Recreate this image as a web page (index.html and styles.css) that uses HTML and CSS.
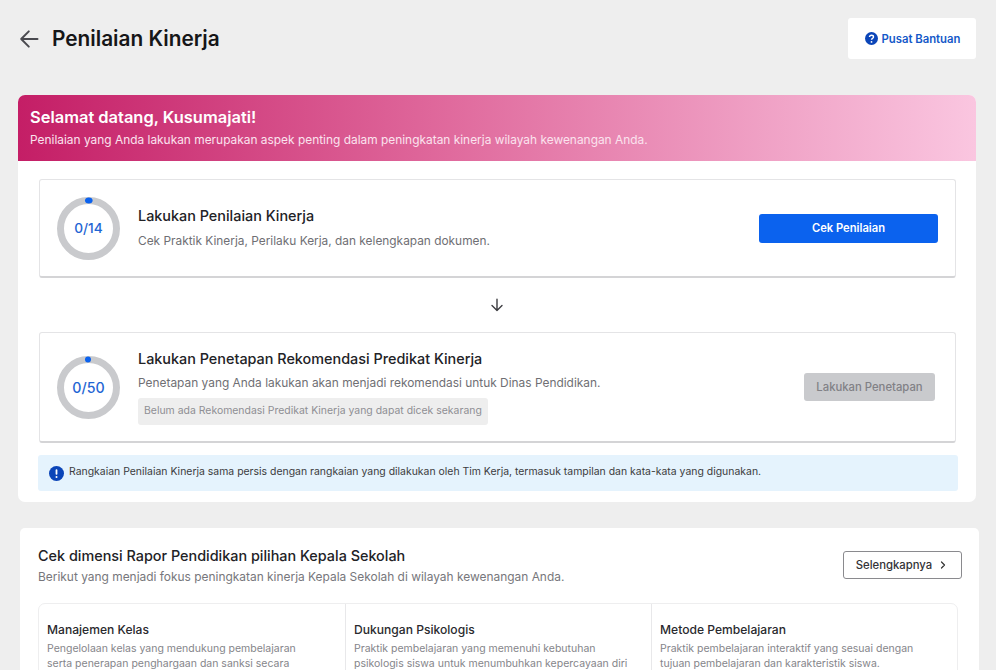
FILE: index.html
```html
<!DOCTYPE html>
<html lang="id">
<head>
<meta charset="utf-8">
<title>Penilaian Kinerja</title>
<link rel="stylesheet" href="styles.css">
</head>
<body>
<div class="page">
  <header class="top">
    <div class="top-left">
      <svg class="back" width="24" height="24" viewBox="0 0 24 24" fill="none" stroke="#4a4a4f" stroke-width="2" stroke-linecap="round" stroke-linejoin="round"><path d="M19.5 12H3.2M10.8 4.4 3.2 12l7.6 7.6"/></svg>
      <h1 class="title">Penilaian Kinerja</h1>
    </div>
    <a class="help">
      <svg width="13" height="13" viewBox="0 0 13 13"><circle cx="6.5" cy="6.5" r="6.5" fill="#0b45b8"/><path d="M4.5 5.1c0-1.2.9-1.9 2-1.9s2 .7 2 1.7c0 1.5-2 1.5-2 2.9" fill="none" stroke="#fff" stroke-width="1.4"/><circle cx="6.5" cy="9.9" r=".9" fill="#fff"/></svg>
      <span>Pusat Bantuan</span>
    </a>
  </header>

  <section class="panel">
    <div class="banner">
      <div class="banner-title">Selamat datang, Kusumajati!</div>
      <div class="banner-sub">Penilaian yang Anda lakukan merupakan aspek penting dalam peningkatan kinerja wilayah kewenangan Anda.</div>
    </div>
    <div class="panel-body">
      <div class="card card-one">
        <div class="ring">
          <svg width="63" height="63" viewBox="0 0 63 63"><circle cx="31.5" cy="31.5" r="28" fill="none" stroke="#c9cacd" stroke-width="7"/><ellipse cx="31.8" cy="3.6" rx="3.8" ry="3" fill="#0b62ee"/></svg>
          <span class="ring-label">0/14</span>
        </div>
        <div class="card-text">
          <h2 class="card-title">Lakukan Penilaian Kinerja</h2>
          <p class="card-desc">Cek Praktik Kinerja, Perilaku Kerja, dan kelengkapan dokumen.</p>
        </div>
        <a class="btn-primary">Cek Penilaian</a>
      </div>
      <div class="arrow">
        <svg width="14" height="14" viewBox="0 0 14 14" fill="none" stroke="#3c3c40" stroke-width="1.4" stroke-linecap="round" stroke-linejoin="round"><path d="M7 1.2v11.4M2 7.6l5 5 5-5"/></svg>
      </div>
      <div class="card card-two">
        <div class="ring">
          <svg width="63" height="63" viewBox="0 0 63 63"><circle cx="31.5" cy="31.5" r="28" fill="none" stroke="#c9cacd" stroke-width="7"/><circle cx="31" cy="3.6" r="3" fill="#0b62ee"/></svg>
          <span class="ring-label">0/50</span>
        </div>
        <div class="card-text">
          <h2 class="card-title">Lakukan Penetapan Rekomendasi Predikat Kinerja</h2>
          <p class="card-desc">Penetapan yang Anda lakukan akan menjadi rekomendasi untuk Dinas Pendidikan.</p>
          <div class="chip">Belum ada Rekomendasi Predikat Kinerja yang dapat dicek sekarang</div>
        </div>
        <a class="btn-disabled">Lakukan Penetapan</a>
      </div>
      <div class="notice">
        <svg width="15" height="15" viewBox="0 0 15 15"><circle cx="7.5" cy="7.5" r="7.5" fill="#0b45b8"/><rect x="6.6" y="3.2" width="1.8" height="5.6" rx=".8" fill="#fff"/><circle cx="7.5" cy="11" r="1" fill="#fff"/></svg>
        <span>Rangkaian Penilaian Kinerja sama persis dengan rangkaian yang dilakukan oleh Tim Kerja, termasuk tampilan dan kata-kata yang digunakan.</span>
      </div>
    </div>
  </section>

  <section class="panel-two">
    <div class="dim-head">
      <div>
        <h2 class="dim-title">Cek dimensi Rapor Pendidikan pilihan Kepala Sekolah</h2>
        <p class="dim-sub">Berikut yang menjadi fokus peningkatan kinerja Kepala Sekolah di wilayah kewenangan Anda.</p>
      </div>
      <a class="btn-outline">
        <span>Selengkapnya</span>
        <svg width="8" height="10" viewBox="0 0 8 10" fill="none" stroke="#333" stroke-width="1.2" stroke-linecap="round" stroke-linejoin="round"><path d="M2.5 2 5.5 5 2.5 8"/></svg>
      </a>
    </div>
    <div class="dims">
      <article class="dim">
        <h3 class="dim-name">Manajemen Kelas</h3>
        <p class="dim-desc">Pengelolaan kelas yang mendukung pembelajaran<br>serta penerapan penghargaan dan sanksi secara</p>
      </article>
      <article class="dim">
        <h3 class="dim-name">Dukungan Psikologis</h3>
        <p class="dim-desc">Praktik pembelajaran yang memenuhi kebutuhan<br>psikologis siswa untuk menumbuhkan kepercayaan diri</p>
      </article>
      <article class="dim">
        <h3 class="dim-name">Metode Pembelajaran</h3>
        <p class="dim-desc">Praktik pembelajaran interaktif yang sesuai dengan<br>tujuan pembelajaran dan karakteristik siswa.</p>
      </article>
    </div>
  </section>
</div>
</body>
</html>
```
FILE: styles.css
```css
* { box-sizing: border-box; }
html, body { margin: 0; padding: 0; height: 100%; overflow: hidden; }
body { background: #eeeeee; font-family: Inter, "Liberation Sans", sans-serif; color: #2a2a2e; }
h1, h2, h3, p { margin: 0; }
.page { padding: 18px 20px 0 18px; width: 996px; height: 670px; overflow: hidden; }

.top { display: flex; justify-content: space-between; align-items: center; height: 41px; width: 958px; }
.top-left { display: flex; align-items: center; gap: 10px; }
.back { flex: none; }
.title { font-size: 20.8px; font-weight: 600; color: #161618; line-height: 28px; }
.help { display: flex; align-items: center; justify-content: center; gap: 4px; width: 128px; height: 41px; padding-left: 1px; background: #fff; border-radius: 3px; color: #1458c8; font-size: 11.3px; font-weight: 600; }

.panel { margin-top: 36px; width: 958px; height: 407px; background: #fff; border-radius: 7px; overflow: hidden; }
.banner { height: 66px; padding: 12px 12px 0; background: linear-gradient(90deg, #c41e66 0%, #e06a9d 45%, #fac6e0 100%); color: #fff; }
.banner-title { font-size: 16.45px; font-weight: 600; line-height: 21px; }
.banner-sub { font-size: 11.92px; line-height: 16px; margin-top: 4px; color: #fbe3ee; }
.panel-body { padding: 18px 0 0 21px; }

.card { display: flex; align-items: center; width: 917px; background: #fff; border: 1px solid #e4e4e6; border-bottom: 2px solid #d4d4d6; border-radius: 3px; padding-left: 17px; }
.card-one { height: 99px; padding-right: 17px; }
.card-two { height: 111px; padding-right: 20px; }
.ring { position: relative; flex: none; width: 63px; height: 63px; display: flex; align-items: center; justify-content: center; }
.ring svg { position: absolute; inset: 0; }
.ring-label { color: #1f66d4; font-size: 13.7px; font-weight: 500; }
.card-two .ring-label { font-size: 14.2px; }
.card-text { flex: 1; margin-left: 18px; }
.card-title { font-size: 14.4px; font-weight: 500; color: #222226; line-height: 18px; }
.card-desc { font-size: 11.88px; line-height: 16px; margin-top: 8px; color: #6f6f74; }
.card-two .card-desc { margin-top: 7px; font-size: 11.92px; }
.chip { display: inline-block; margin-top: 7px; height: 27px; line-height: 26px; padding: 0 6.5px 0 6px; background: #eeeeee; border-radius: 3px; font-size: 10.45px; color: #8f8f94; }
.btn-primary { flex: none; width: 179px; height: 29px; line-height: 29px; text-align: center; background: #0b62ee; color: #fff; font-size: 11.2px; font-weight: 600; border-radius: 3px; }
.btn-disabled { flex: none; width: 131px; height: 28px; line-height: 28px; text-align: center; background: #c9cacd; color: #818186; font-size: 11.3px; font-weight: 500; border-radius: 3px; }
.arrow { width: 915px; height: 54px; display: flex; align-items: center; justify-content: center; }

.notice { display: flex; align-items: center; gap: 5px; width: 920px; height: 36px; margin: 12px 0 0 -1px; padding: 0 0 3px 11px; background: #e5f3fd; border-radius: 3px; font-size: 10.45px; color: #3c3c40; }
.notice svg { flex: none; margin-top: 3px; }

.panel-two { margin: 26px 0 0 2px; width: 959px; height: 200px; background: #fff; border-radius: 5px; padding: 18px 17px 0 18px; }
.dim-head { display: flex; justify-content: space-between; align-items: flex-start; }
.dim-title { font-size: 14.4px; font-weight: 500; line-height: 20px; color: #222226; }
.dim-sub { font-size: 11.93px; line-height: 16px; margin-top: 3px; color: #77777c; }
.btn-outline { display: flex; align-items: center; justify-content: center; gap: 7px; width: 119px; height: 28px; margin-top: 5px; padding-right: 2px; border: 1px solid #8a8a8e; border-radius: 3px; background: #fff; font-size: 11.3px; font-weight: 500; color: #333337; }
.dims { display: grid; grid-template-columns: 306px 306px 307px; width: 920px; margin-top: 18px; border: 1px solid #eeeeef; border-radius: 7px; }
.dim { padding: 17px 8px 12px 8px; height: 120px; }
.dim + .dim { border-left: 1px solid #e8e8ea; }
.dim-name { font-size: 12.1px; font-weight: 500; line-height: 18px; color: #2a2a2e; }
.dim-desc { font-size: 10.5px; line-height: 15px; margin-top: 2px; color: #85858a; white-space: nowrap; }
```
